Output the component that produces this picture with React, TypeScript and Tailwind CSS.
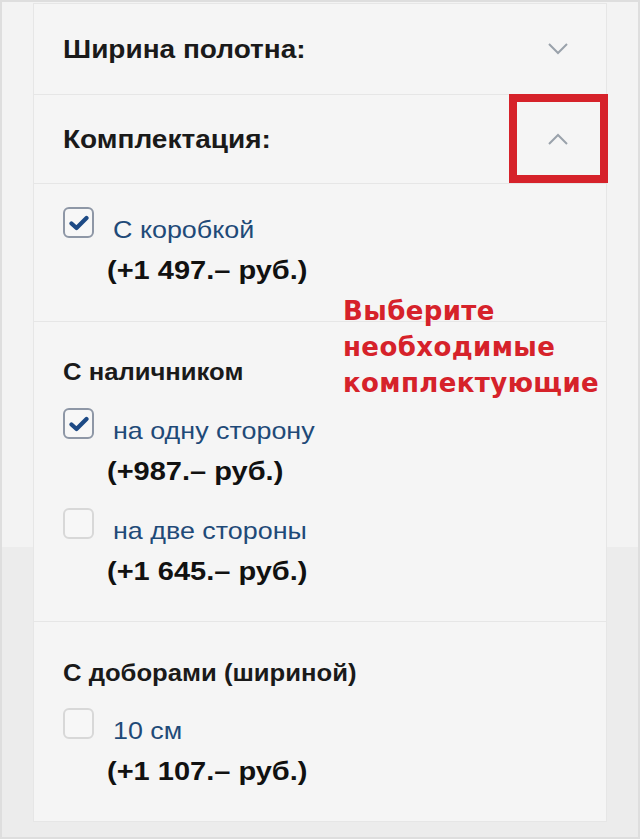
import React from "react";

type Option = { label: string; price: string; checked: boolean };

function Chevron({ up }: { up?: boolean }) {
  return (
    <svg width="22" height="12" viewBox="0 0 22 12" className="text-[#9aa2ab]">
      <path
        d={up ? "M2 11 L11 2 L20 11" : "M2 1 L11 10 L20 1"}
        fill="none"
        stroke="currentColor"
        strokeWidth="2"
      />
    </svg>
  );
}

function Checkbox({ checked }: { checked: boolean }) {
  return (
    <div
      className={
        checked
          ? "h-[31px] w-[31px] shrink-0 rounded-[6px] border-2 border-[#8e97a6] bg-[#f7f7f7] flex items-center justify-center"
          : "h-[31px] w-[31px] shrink-0 rounded-[6px] border-2 border-[#d8d8d8] bg-[#f7f7f7]"
      }
    >
      {checked && (
        <svg width="20" height="16" viewBox="0 0 20 16">
          <path
            d="M2.5 8.5 L7.5 13 L17.5 3"
            fill="none"
            stroke="#1d4a85"
            strokeWidth="4.2"
            strokeLinecap="round"
            strokeLinejoin="round"
          />
        </svg>
      )}
    </div>
  );
}

// the source type is set a little wider than Arial, so stretch it from the left edge
function OptionRow({ option }: { option: Option }) {
  return (
    <div className="flex">
      <Checkbox checked={option.checked} />
      <div className="flex flex-col items-start">
        <span className="mt-[8px] ml-[19px] inline-block origin-left scale-x-[1.12] text-[24px] leading-[30px] text-[#1f4a78]">
          {option.label}
        </span>
        <span className="mt-[8px] ml-[13px] inline-block origin-left scale-x-[1.16] text-[25px] leading-[34px] font-bold text-[#111]">
          {option.price}
        </span>
      </div>
    </div>
  );
}

function Header({ title, up }: { title: string; up?: boolean }) {
  return (
    <div className="flex items-center justify-between pl-[29px] pr-[37px] h-full">
      <span className="inline-block origin-left scale-x-[1.12] text-[25px] leading-[30px] font-bold text-[#1a1a1a]">
        {title}
      </span>
      <Chevron up={up} />
    </div>
  );
}

function SubTitle({ children }: { children: React.ReactNode }) {
  return (
    <div className="inline-block origin-left scale-x-[1.115] text-[23px] leading-[30px] font-bold text-[#1a1a1a]">
      {children}
    </div>
  );
}

export default function App() {
  return (
    <div
      className="relative h-[839px] w-[640px] overflow-hidden border-2 border-[#dedede] bg-[linear-gradient(to_bottom,#f3f3f3_0,#f3f3f3_545px,#ececec_545px)] px-[31px] pt-[1px]"
      style={{ fontFamily: '"Liberation Sans", Arial, sans-serif' }}
    >
      <div className="border border-[#e6e6e6] bg-[#f5f5f5]">
        <div className="h-[91px] border-b border-[#e6e6e6]">
          <Header title="Ширина полотна:" />
        </div>
        <div className="relative h-[89px] border-b border-[#e6e6e6]">
          <Header title="Комплектация:" up />
          <div className="absolute -top-px right-[-2px] h-[89px] w-[99px] border-[8px] border-[#d6222a]" />
        </div>
        <div className="border-b border-[#e6e6e6] pl-[29px] pt-[23px] pb-[34px]">
          <OptionRow option={{ label: "С коробкой", price: "(+1 497.– руб.)", checked: true }} />
        </div>
        <div className="border-b border-[#e6e6e6] pl-[29px] pt-[35px] pb-[33px]">
          <SubTitle>С наличником</SubTitle>
          <div className="mt-[21px] flex flex-col gap-5">
            <OptionRow option={{ label: "на одну сторону", price: "(+987.– руб.)", checked: true }} />
            <OptionRow option={{ label: "на две стороны", price: "(+1 645.– руб.)", checked: false }} />
          </div>
        </div>
        <div className="pl-[29px] pt-[36px] pb-[33px]">
          <SubTitle>С доборами (шириной)</SubTitle>
          <div className="mt-[20px]">
            <OptionRow option={{ label: "10 см", price: "(+1 107.– руб.)", checked: false }} />
          </div>
        </div>
      </div>

      <div
        className="absolute left-[341px] top-[291px] text-[26px] leading-[36px] tracking-[0.4px] font-bold text-[#d6222a]"
        style={{ fontFamily: '"DejaVu Sans", Verdana, sans-serif' }}
      >
        Выберите
        <br />
        необходимые
        <br />
        комплектующие
      </div>
    </div>
  );
}
